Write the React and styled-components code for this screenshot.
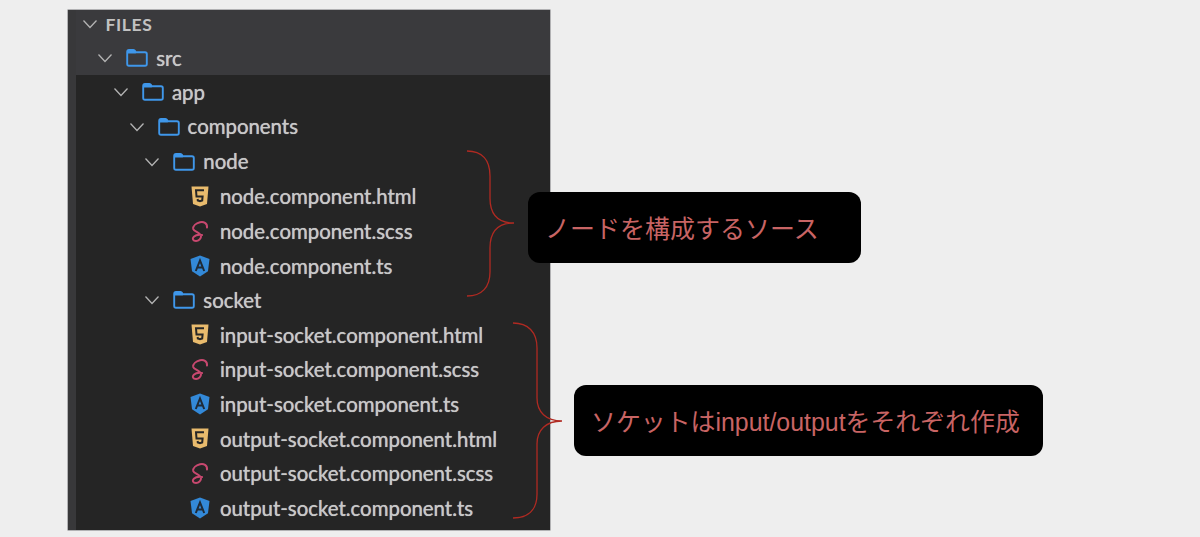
import React from "react";
import styled, { createGlobalStyle } from "styled-components";

const Global = createGlobalStyle`
  html, body { margin: 0; padding: 0; background: #eeeeee; }
  body { width: 1200px; height: 537px; overflow: hidden; }
`;

const Stage = styled.div`
  position: relative;
  width: 1200px;
  height: 537px;
  padding: 10px 0 0 68px;
  box-sizing: border-box;
  background: #eeeeee;
`;

const Panel = styled.div`
  width: 482px;
  height: 520px;
  display: flex;
  background: #252525;
  box-shadow: 0 0 0 0.5px #77777a;
`;

const Rail = styled.div`
  width: 8px;
  background: #38383a;
  flex: none;
`;

const Tree = styled.div`
  flex: 1;
  display: flex;
  flex-direction: column;
  font-family: Lato, "Open Sans", sans-serif;
  color: #c8c8c8;
`;

const Sticky = styled.div`
  background: #3a3a3d;
`;

const Row = styled.div`
  height: ${p => p.$h || 34.65}px;
  display: flex;
  align-items: center;
  padding-left: ${p => 4.5 + p.$depth * 15.7}px;
  padding-bottom: ${p => p.$pb || 0}px;
  box-sizing: border-box;
  font-size: 20.4px;
  white-space: nowrap;
`;

const Label = styled.span`
  margin-left: ${p => p.$gap}px;
  position: relative;
  top: ${p => p.$nudge}px;
  text-shadow: 0 0 0.7px #c8c8c8;
`;

const Heading = styled.span`
  margin-left: 7px;
  font-size: 17.5px;
  font-weight: 700;
  letter-spacing: 0.6px;
  color: #c2c2c2;
`;

const IconSlot = styled.span`
  flex: none;
  width: 20px;
  height: 22px;
  display: flex;
  align-items: center;
  justify-content: center;
`;

const Callout = styled.div`
  position: absolute;
  left: ${p => p.$x}px;
  top: ${p => p.$y}px;
  width: ${p => p.$w}px;
  height: 71px;
  padding-left: ${p => p.$pad}px;
  padding-bottom: 2px;
  box-sizing: border-box;
  display: flex;
  align-items: center;
  background: #000;
  border-radius: 12px;
  color: #c86464;
  font-family: "Liberation Sans", "Noto Sans CJK JP", sans-serif;
  font-size: ${p => p.$size}px;
  white-space: nowrap;
`;

const Brace = styled.svg`
  position: absolute;
  left: 0;
  top: 0;
  pointer-events: none;
`;

const Chevron = () => (
  <svg width="18" height="18" viewBox="0 0 18 18" style={{ flex: "none" }}>
    <path d="M2.5 5.5 L9 12.5 L15.5 5.5" fill="none" stroke="#b4b4b4" strokeWidth="1.3" />
  </svg>
);

const Folder = () => (
  <svg width="22" height="18" viewBox="0 0 22 18" style={{ flex: "none", marginLeft: 12 }}>
    <path
      d="M1.2 3 Q1.2 1 3 1 H7.5 Q8.5 1 9 2 L9.6 3.2 H19 Q20.8 3.2 20.8 5 V15 Q20.8 16.8 19 16.8 H3 Q1.2 16.8 1.2 15 Z"
      fill="none"
      stroke="#3f97ea"
      strokeWidth="1.9"
    />
    <path d="M1.2 3 Q1.2 1 3 1 H7.5 Q8.5 1 9 2 L9.6 3.2 V4.4 H1.2 Z" fill="#3f97ea" />
  </svg>
);

const Html = () => (
  <svg width="18" height="21" viewBox="0 0 18 21">
    <path d="M0.5 0.5 H17.5 L16 18 L9 20.5 L2 18 Z" fill="#e9bb6d" />
    <path d="M13 4.2 H5 L5.5 10.6 H11.6 L11.2 14.4 L9 15.2 L6.8 14.4 L6.6 13" fill="none" stroke="#262626" strokeWidth="2" />
  </svg>
);

const Sass = () => (
  <svg width="20" height="22" viewBox="0 0 20 22">
    <path
      d="M17 7.5 C17.5 3 13.5 1.2 10 2.2 C6 3.3 2.6 6 3.2 9 C3.8 11.6 10.5 12.6 11 16 C11.3 18.8 8.5 21 6 21 C3 21 1.8 18.8 3.8 16.8 C5.5 15.2 9 14.6 12 15"
      fill="none"
      stroke="#c8486f"
      strokeWidth="2"
      strokeLinecap="round"
    />
  </svg>
);

const Angular = () => (
  <svg width="20" height="22" viewBox="0 0 20 22">
    <path d="M10 0.5 L19.5 4 L18 16.2 L10 21.5 L2 16.2 L0.5 4 Z" fill="#3389d8" />
    <path d="M5.8 16 L10 5.5 L14.2 16 M7.2 12.4 H12.8" fill="none" stroke="#1f2a36" strokeWidth="2" />
  </svg>
);

const FILE_ICONS = { html: Html, scss: Sass, ts: Angular };

const FileRow = ({ name, kind }) => {
  const Icon = FILE_ICONS[kind];
  return (
    <Row $depth={6.97}>
      <IconSlot><Icon /></IconSlot>
      <Label $gap={10} $nudge={0}>{name}</Label>
    </Row>
  );
};

const FolderRow = ({ name, depth, h }) => (
  <Row $depth={depth} $h={h}>
    <Chevron />
    <Folder />
    <Label $gap={8} $nudge={-0.5}>{name}</Label>
  </Row>
);

const files = (prefix) => [
  [`${prefix}.component.html`, "html"],
  [`${prefix}.component.scss`, "scss"],
  [`${prefix}.component.ts`, "ts"],
];

export default function App() {
  return (
    <Stage>
      <Global />
      <Panel>
        <Rail />
        <Tree>
          <Sticky>
            <Row $depth={0} $h={31} $pb={3}>
              <Chevron />
              <Heading>FILES</Heading>
            </Row>
            <FolderRow name="src" depth={1} h={34} />
          </Sticky>
          <FolderRow name="app" depth={2} />
          <FolderRow name="components" depth={3} />
          <FolderRow name="node" depth={4} />
          {files("node").map(([n, k]) => <FileRow key={n} name={n} kind={k} />)}
          <FolderRow name="socket" depth={4} />
          {files("input-socket").map(([n, k]) => <FileRow key={n} name={n} kind={k} />)}
          {files("output-socket").map(([n, k]) => <FileRow key={n} name={n} kind={k} />)}
        </Tree>
      </Panel>
      <Brace width="1200" height="537" viewBox="0 0 1200 537">
        <path
          d="M467 151 C482 151 490 160 490 176 V198 C490 214 498 223 514 223 C498 223 490 232 490 248 V272 C490 287 482 296 467 296"
          fill="none" stroke="#b02a22" strokeWidth="1.3"
        />
        <path
          d="M513 323 C528 323 537 332 537 348 V398 C537 412 546 421 562 421 C546 421 537 430 537 444 V494 C537 510 528 518 513 518"
          fill="none" stroke="#b02a22" strokeWidth="1.3"
        />
      </Brace>
      <Callout $x={528} $y={192} $w={333} $pad={17} $size={25}>ノードを構成するソース</Callout>
      <Callout $x={574} $y={385} $w={469} $pad={17} $size={24.9}>ソケットはinput/outputをそれぞれ作成</Callout>
    </Stage>
  );
}
